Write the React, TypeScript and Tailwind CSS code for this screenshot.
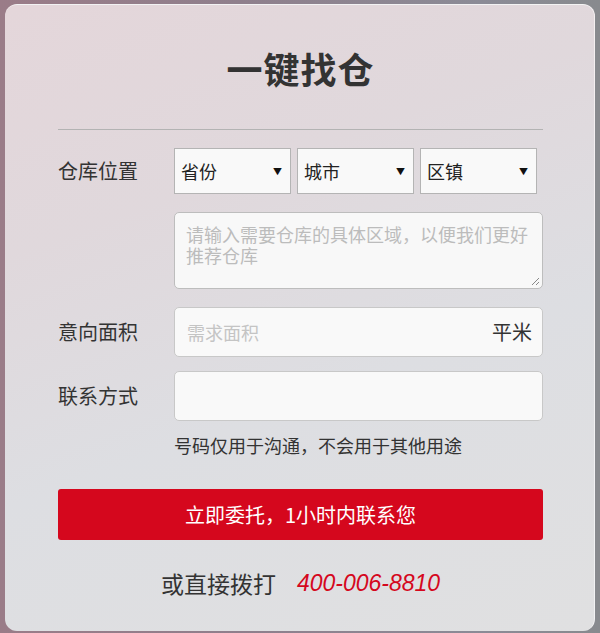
import React from "react";

const cjk = { fontFamily: '"Microsoft YaHei", "Noto Sans CJK SC", "Liberation Sans", sans-serif' };

function Select({ label }: { label: string }) {
  return (
    <div className="flex h-[46px] w-[117px] items-center justify-between border border-[#b4b4b4] bg-[#f9f9f9] pl-[6px] pr-[8px] text-[18px] leading-none text-[#222]">
      <span>{label}</span>
      <span className="text-[9px] text-[#111]">▼</span>
    </div>
  );
}

export default function App() {
  return (
    <div
      className="h-[633px] w-[600px] overflow-hidden bg-[linear-gradient(90deg,#9a7c88_0%,#8f7f8c_40%,#8b8b96_80%,#888a8e_100%)] px-[5px] pt-[4px]"
      style={cjk}
    >
      <div className="relative h-[627px] w-[590px] rounded-[12px] border-t border-r border-white/60 bg-[linear-gradient(160deg,#e4d6da_0%,#e0d8dc_30%,#dddee2_60%,#e0e0e1_100%)] pl-[53px] pr-[51px] text-[#333]">
        <div className="flex h-[124px] items-center justify-center pt-[2px]">
          <h1 className="text-[36px] font-bold leading-none tracking-[1px] text-[#333]">一键找仓</h1>
        </div>
        <div className="h-px w-full bg-[#b3b3b3]" />

        <div className="mt-[18px] flex items-start">
          <div className="flex h-[46px] w-[116px] shrink-0 items-center text-[20px] leading-none text-[#333]">仓库位置</div>
          <div className="flex gap-[6px]">
            <Select label="省份" />
            <Select label="城市" />
            <Select label="区镇" />
          </div>
        </div>

        <div className="mt-[18px] flex">
          <div className="w-[116px] shrink-0" />
          <div className="relative h-[77px] flex-1 rounded-[5px] border border-[#bdbdbd] bg-[#f8f8f8] px-[11px] pt-[11px] text-[18px] leading-[21px] text-[#bcbcbc]">
            请输入需要仓库的具体区域，以便我们更好推荐仓库
            <svg className="absolute bottom-[2px] right-[2px]" width="10" height="10" viewBox="0 0 10 10">
              <line x1="9" y1="2" x2="2" y2="9" stroke="#888" strokeWidth="1" />
              <line x1="9" y1="6" x2="6" y2="9" stroke="#888" strokeWidth="1" />
            </svg>
          </div>
        </div>

        <div className="mt-[18px] flex items-center">
          <div className="w-[116px] shrink-0 text-[20px] leading-none text-[#333]">意向面积</div>
          <div className="flex h-[50px] flex-1 items-center justify-between rounded-[5px] border border-[#c8c8c8] bg-[#f9f9f9] pl-[12px] pr-[10px]">
            <span className="text-[18px] leading-none text-[#c4c4c4]">需求面积</span>
            <span className="text-[20px] leading-none text-[#333]">平米</span>
          </div>
        </div>

        <div className="mt-[14px] flex items-center">
          <div className="w-[116px] shrink-0 text-[20px] leading-none text-[#333]">联系方式</div>
          <div className="h-[50px] flex-1 rounded-[5px] border border-[#c8c8c8] bg-[#f9f9f9]" />
        </div>

        <div className="mt-[15px] pl-[116px] text-[18px] leading-none text-[#333]">号码仅用于沟通，不会用于其他用途</div>

        <div className="mt-[35px] flex h-[51px] w-full items-center justify-center rounded-[3px] bg-[#d5071d] text-[20px] leading-none text-white">
          立即委托，1小时内联系您
        </div>

        <div className="mt-[32px] flex items-center justify-center">
          <span className="text-[23px] leading-none text-[#333]">或直接拨打</span>
          <span
            className="ml-[21px] text-[23px] italic leading-none text-[#d5071d]"
            style={{ fontFamily: '"Liberation Sans", Arial, sans-serif' }}
          >
            400-006-8810
          </span>
        </div>
      </div>
    </div>
  );
}
